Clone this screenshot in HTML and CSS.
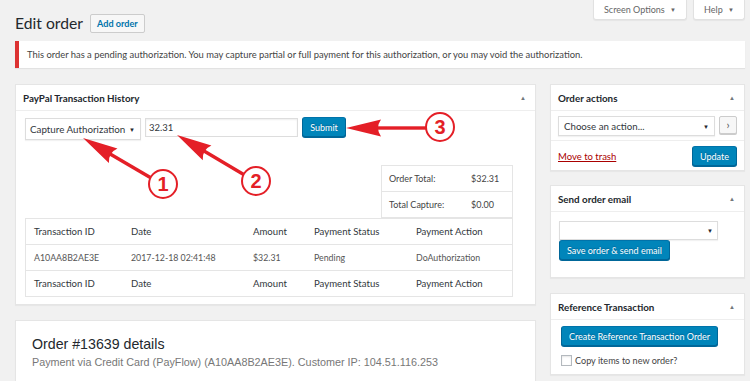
FILE: index.html
```html
<!DOCTYPE html>
<html lang="en">
<head>
    <meta charset="UTF-8">
    <title>Edit order</title>
    <link rel="stylesheet" href="styles.css">
</head>
<body>
<div class="wrap">
    <div class="head">
        <div class="title-row">
            <h1>Edit order</h1>
            <a class="btn-add" href="#">Add order</a>
        </div>
        <div class="tabs">
            <div class="tab tab-screen">Screen Options <span class="caret">&#9660;</span></div>
            <div class="tab tab-help">Help <span class="caret">&#9660;</span></div>
        </div>
    </div>

    <div class="notice">
        This order has a pending authorization. You may capture partial or full payment for this authorization, or you may void the authorization.
    </div>

    <div class="columns">
        <div class="main-col">
            <div class="postbox">
                <div class="postbox-head">
                    <h2>PayPal Transaction History</h2>
                    <span class="toggle">&#9650;</span>
                </div>
                <div class="paypal-body">
                    <form class="capture-row">
                        <div class="select select-capture">Capture Authorization <span class="caret">&#9660;</span></div>
                        <input class="amount" type="text" value="32.31">
                        <button class="btn-primary btn-submit" type="submit">Submit</button>
                    </form>

                    <table class="totals">
                        <tr><td>Order Total:</td><td>$32.31</td></tr>
                        <tr><td>Total Capture:</td><td>$0.00</td></tr>
                    </table>

                    <table class="history">
                        <tr class="th">
                            <td>Transaction ID</td><td>Date</td><td>Amount</td><td>Payment Status</td><td>Payment Action</td>
                        </tr>
                        <tr class="data">
                            <td>A10AA8B2AE3E</td><td>2017-12-18 02:41:48</td><td>$32.31</td><td>Pending</td><td>DoAuthorization</td>
                        </tr>
                        <tr class="th">
                            <td>Transaction ID</td><td>Date</td><td>Amount</td><td>Payment Status</td><td>Payment Action</td>
                        </tr>
                    </table>
                </div>
            </div>

            <div class="postbox order-data">
                <h2 class="order-title">Order #13639 details</h2>
                <p class="order-meta">Payment via Credit Card (PayFlow) (A10AA8B2AE3E). Customer IP: 104.51.116.253</p>
            </div>
        </div>

        <div class="side-col">
            <div class="postbox">
                <div class="postbox-head">
                    <h2>Order actions</h2>
                    <span class="toggle">&#9650;</span>
                </div>
                <div class="actions-body">
                    <div class="select select-action">Choose an action... <span class="caret">&#9660;</span></div>
                    <span class="btn-go">&#8250;</span>
                </div>
                <div class="actions-foot">
                    <a class="trash" href="#">Move to trash</a>
                    <button class="btn-primary">Update</button>
                </div>
            </div>

            <div class="postbox box-email">
                <div class="postbox-head">
                    <h2>Send order email</h2>
                    <span class="toggle">&#9650;</span>
                </div>
                <div class="email-body">
                    <div class="select select-email"><span class="caret">&#9660;</span></div>
                    <button class="btn-primary">Save order &amp; send email</button>
                </div>
            </div>

            <div class="postbox box-ref">
                <div class="postbox-head">
                    <h2>Reference Transaction</h2>
                    <span class="toggle">&#9650;</span>
                </div>
                <div class="ref-body">
                    <button class="btn-primary">Create Reference Transaction Order</button>
                    <label class="copy"><input type="checkbox"> Copy items to new order?</label>
                </div>
            </div>
        </div>
    </div>
</div>

<svg class="callouts" width="750" height="381" viewBox="0 0 750 381">
    <g fill="#e41f27">
        <g transform="translate(83,138) rotate(30.4)">
            <path d="M0 0 L35 -8.5 Q29 0 35 8.5 Z"/>
            <rect x="28" y="-1.7" width="51" height="3.4"/>
        </g>
        <g transform="translate(177,135) rotate(30.7)">
            <path d="M0 0 L35 -8.5 Q29 0 35 8.5 Z"/>
            <rect x="28" y="-1.7" width="50" height="3.4"/>
        </g>
        <g transform="translate(346,128)">
            <path d="M0 0 L35 -8.5 Q29 0 35 8.5 Z"/>
            <rect x="28" y="-1.7" width="54" height="3.4"/>
        </g>
    </g>
    <g class="badge">
        <circle cx="163" cy="184" r="14"/>
        <text x="163" y="191">1</text>
        <circle cx="256" cy="181" r="14"/>
        <text x="256" y="188">2</text>
        <circle cx="440" cy="127" r="14"/>
        <text x="440" y="134">3</text>
    </g>
</svg>
</body>
</html>
```

FILE: styles.css
```css
body {
    margin: 0;
    position: relative;
    background: #f1f1f1;
    color: #444;
    font-family: Lato, "Open Sans", sans-serif;
    font-size: 9.5px;
}

.wrap {
    padding: 0 5px 0 15px;
}

/* header */
.head {
    display: flex;
    justify-content: space-between;
    align-items: flex-start;
}
.title-row {
    display: flex;
    align-items: center;
    gap: 7px;
    padding-top: 14px;
}
h1 {
    margin: 0;
    font-size: 15.7px;
    font-weight: 400;
    line-height: 19px;
    color: #23282d;
}
.btn-add {
    display: block;
    box-sizing: border-box;
    height: 19px;
    line-height: 17px;
    padding: 0 6px;
    border: 1px solid #ccc;
    border-radius: 2px;
    background: #f7f7f7;
    color: #0073aa;
    font-size: 9.1px;
    font-weight: 700;
    text-decoration: none;
}
.tabs {
    display: flex;
    gap: 6px;
}
.tab {
    box-sizing: border-box;
    height: 20px;
    line-height: 19px;
    background: #fff;
    border: 1px solid #e1e1e1;
    border-top: none;
    border-radius: 0 0 3px 3px;
    box-shadow: 0 1px 1px rgba(0,0,0,.05);
    color: #666;
    font-size: 9px;
    text-align: center;
}
.tab-screen { width: 94px; }
.tab-help { width: 52px; }
.caret {
    font-size: 6px;
    vertical-align: 1px;
    margin-left: 3px;
}

/* notice */
.notice {
    margin: 8px 0 16px;
    padding: 8px 8px;
    line-height: 11px;
    background: #fff;
    border-left: 4px solid #dc3232;
    box-shadow: 0 1px 1px rgba(0,0,0,.06);
    font-size: 9.4px;
    color: #444;
}

/* columns */
.columns {
    display: flex;
    gap: 14px;
    align-items: flex-start;
}
.main-col {
    width: 521px;
}
.side-col {
    width: 195px;
}

.postbox {
    background: #fff;
    border: 1px solid #e5e5e5;
    box-shadow: 0 1px 1px rgba(0,0,0,.04);
}
.postbox-head {
    display: flex;
    justify-content: space-between;
    align-items: center;
    height: 25px;
    padding: 0 9px 0 7px;
    border-bottom: 1px solid #eee;
}
.postbox-head h2 {
    margin: 0;
    font-size: 9.8px;
    font-weight: 700;
    color: #23282d;
}
.toggle {
    font-size: 6px;
    color: #72777c;
}

/* paypal box */
.paypal-body {
    display: flex;
    flex-direction: column;
    padding: 7px 22px 7px 9px;
}
.capture-row {
    display: flex;
    align-items: flex-start;
    gap: 4px;
    margin: 0;
}
.select {
    box-sizing: border-box;
    display: flex;
    justify-content: space-between;
    align-items: center;
    background: #fff;
    border: 1px solid #ddd;
    box-shadow: 0 1px 1px rgba(0,0,0,.05);
    color: #32373c;
}
.select .caret {
    color: #23282d;
}
.select-capture {
    width: 116px;
    height: 22px;
    padding: 0 5px 0 4px;
    font-size: 9.8px;
}
.amount {
    box-sizing: border-box;
    width: 153px;
    height: 19px;
    margin: 0;
    padding: 0 3px;
    border: 1px solid #ddd;
    box-shadow: inset 0 1px 2px rgba(0,0,0,.07);
    font-family: inherit;
    font-size: 9.5px;
    color: #32373c;
}
.btn-primary {
    box-sizing: border-box;
    height: 20px;
    padding: 0 7px;
    margin: 0;
    background: #0085ba;
    border: 1px solid;
    border-color: #0073aa #006799 #006799;
    border-radius: 3px;
    box-shadow: 0 1px 0 #006799;
    color: #fff;
    text-shadow: 0 -1px 1px #006799;
    font-family: inherit;
    font-size: 9px;
    cursor: pointer;
}
.btn-submit {
    width: 44px;
    margin-top: -1px;
    padding: 0;
}

.totals {
    align-self: flex-end;
    width: 132px;
    margin-top: 25px;
    border-collapse: collapse;
    border: 1px solid #e5e5e5;
    border-bottom: none;
    font-size: 9px;
    color: #444;
}
.totals td {
    height: 25px;
    padding: 0 0 0 7px;
    border-bottom: 1px solid #e5e5e5;
}
.totals td:first-child {
    width: 75px;
}

.history {
    width: 100%;
    border-collapse: collapse;
    border: 1px solid #e5e5e5;
    table-layout: fixed;
}
.history td {
    height: 25px;
    padding: 0 0 0 8px;
    border-bottom: 1px solid #e5e5e5;
    white-space: nowrap;
}
.history td:nth-child(1) { width: 89px; }
.history td:nth-child(2) { width: 114px; }
.history td:nth-child(3) { width: 53px; }
.history td:nth-child(4) { width: 94px; }
.history .th td {
    font-size: 9.6px;
    color: #32373c;
}
.history .data td {
    font-size: 8.8px;
    color: #555;
}

/* order details */
.order-data {
    margin-top: 15px;
    padding: 15px 16px 20px;
}
.order-title {
    margin: 0;
    font-family: "Liberation Sans", Arial, sans-serif;
    font-size: 14.2px;
    font-weight: 400;
    line-height: 17px;
    color: #23282d;
}
.order-meta {
    margin: 2px 0 0;
    font-family: "Liberation Sans", Arial, sans-serif;
    font-size: 10.8px;
    line-height: 14px;
    color: #777;
}

/* sidebar */
.actions-body {
    display: flex;
    gap: 4px;
    padding: 5px 7px 4px;
}
.select-action {
    flex: 1;
    height: 20px;
    padding: 0 5px 0 5px;
    font-size: 9.7px;
}
.btn-go {
    box-sizing: border-box;
    width: 18px;
    height: 18px;
    line-height: 15px;
    text-align: center;
    background: #f7f7f7;
    border: 1px solid #ccc;
    border-radius: 2px;
    box-shadow: 0 1px 0 #ccc;
    color: #555;
    font-size: 11px;
}
.actions-foot {
    display: flex;
    justify-content: space-between;
    align-items: center;
    padding: 5px 7px 4px;
    border-top: 1px solid #eee;
}
.trash {
    color: #a00;
    font-size: 9.5px;
}

.box-email {
    margin-top: 14px;
}
.email-body {
    display: flex;
    flex-direction: column;
    align-items: flex-start;
    padding: 9px 7px 17px 8px;
}
.select-email {
    justify-content: flex-end;
    width: 159px;
    height: 19px;
    padding: 0 4px;
}
.box-ref {
    margin-top: 15px;
}
.ref-body {
    display: flex;
    flex-direction: column;
    align-items: flex-start;
    gap: 9px;
    padding: 6px 7px 8px 10px;
}
.copy {
    display: flex;
    align-items: center;
    gap: 3px;
    font-size: 9.1px;
    color: #444;
}
.copy input {
    appearance: none;
    width: 11px;
    height: 11px;
    margin: 0;
    border: 1px solid #b4b9be;
    background: #fff;
    box-shadow: inset 0 1px 2px rgba(0,0,0,.1);
}

/* red callouts drawn over the screenshot */
.callouts {
    position: absolute;
    top: 0;
    left: 0;
    pointer-events: none;
}
.badge circle {
    fill: #fff;
    stroke: #e41f27;
    stroke-width: 2;
}
.badge text {
    fill: #e41f27;
    font-family: "Liberation Sans", Arial, sans-serif;
    font-weight: 700;
    font-size: 20px;
    text-anchor: middle;
}
```
